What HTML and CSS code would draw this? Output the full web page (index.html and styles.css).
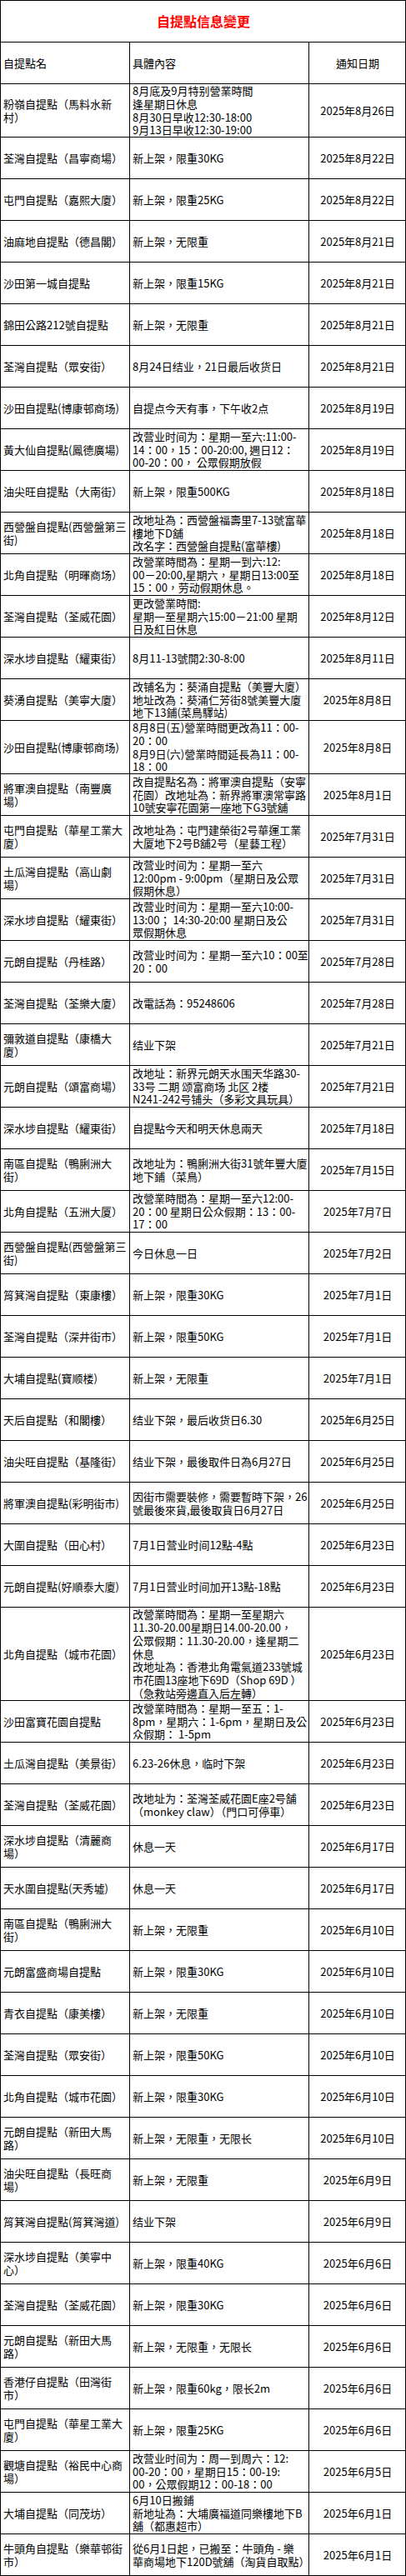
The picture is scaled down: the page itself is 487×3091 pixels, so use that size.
FILE: index.html
```html
<!DOCTYPE html>
<html lang="zh-Hant">
<head>
<meta charset="utf-8">
<title>自提點信息變更</title>
<link rel="stylesheet" href="styles.css">
</head>
<body>
<div class="sheet">
  <div class="cell title">自提點信息變更</div>

  <div class="cell n">自提點名</div>
  <div class="cell d">具體內容</div>
  <div class="cell dt">通知日期</div>

  <div class="cell n">粉嶺自提點（馬料水新<br>村）</div>
  <div class="cell d">8月底及9月特别營業時間<br>逢星期日休息<br>8月30日早收12:30-18:00<br>9月13日早收12:30-19:00</div>
  <div class="cell dt">2025年8月26日</div>

  <div class="cell n">荃灣自提點（昌寧商場）</div>
  <div class="cell d">新上架，限重30KG</div>
  <div class="cell dt">2025年8月22日</div>

  <div class="cell n">屯門自提點（嘉熙大廈）</div>
  <div class="cell d">新上架，限重25KG</div>
  <div class="cell dt">2025年8月22日</div>

  <div class="cell n">油麻地自提點（德昌閣）</div>
  <div class="cell d">新上架，无限重</div>
  <div class="cell dt">2025年8月21日</div>

  <div class="cell n">沙田第一城自提點</div>
  <div class="cell d">新上架，限重15KG</div>
  <div class="cell dt">2025年8月21日</div>

  <div class="cell n">錦田公路212號自提點</div>
  <div class="cell d">新上架，无限重</div>
  <div class="cell dt">2025年8月21日</div>

  <div class="cell n">荃灣自提點（眾安街）</div>
  <div class="cell d">8月24日结业，21日最后收货日</div>
  <div class="cell dt">2025年8月21日</div>

  <div class="cell n">沙田自提點(博康邨商场)</div>
  <div class="cell d">自提点今天有事，下午收2点</div>
  <div class="cell dt">2025年8月19日</div>

  <div class="cell n">黃大仙自提點(鳳德廣場)</div>
  <div class="cell d">改营业时间为：星期一至六:11:00-<br>14：00，15：00-20:00, 週日12：<br>00-20：00， 公眾假期放假</div>
  <div class="cell dt">2025年8月19日</div>

  <div class="cell n">油尖旺自提點（大南街）</div>
  <div class="cell d">新上架，限重500KG</div>
  <div class="cell dt">2025年8月18日</div>

  <div class="cell n">西營盤自提點(西營盤第三<br>街)</div>
  <div class="cell d">改地址為：西營盤福壽里7-13號富華<br>樓地下D舖<br>改名字：西營盤自提點(富華樓)</div>
  <div class="cell dt">2025年8月18日</div>

  <div class="cell n">北角自提點（明暉商场）</div>
  <div class="cell d">改營業時間為：星期一到六:12:<br>00－20:00,星期六，星期日13:00至<br>15：00，劳动假期休息。</div>
  <div class="cell dt">2025年8月18日</div>

  <div class="cell n">荃灣自提點（荃威花園）</div>
  <div class="cell d">更改營業時間:<br>星期一至星期六15:00－21:00 星期<br>日及紅日休息</div>
  <div class="cell dt">2025年8月12日</div>

  <div class="cell n">深水埗自提點（耀東街）</div>
  <div class="cell d">8月11-13號開2:30-8:00</div>
  <div class="cell dt">2025年8月11日</div>

  <div class="cell n">葵湧自提點（美寧大廈）</div>
  <div class="cell d">改铺名为：葵涌自提點（美豐大廈）<br>地址改為：葵涌仁芳街8號美豐大廈<br>地下13鋪(菜鳥驛站)</div>
  <div class="cell dt">2025年8月8日</div>

  <div class="cell n">沙田自提點(博康邨商场)</div>
  <div class="cell d">8月8日(五)營業時間更改為11：00-<br>20：00<br>8月9日(六)營業時間延長為11：00-<br>18：00</div>
  <div class="cell dt">2025年8月8日</div>

  <div class="cell n">將軍澳自提點（南豐廣<br>場）</div>
  <div class="cell d">改自提點名為：將軍澳自提點（安寧<br>花園）改地址為：新界將軍澳常寧路<br>10號安寧花園第一座地下G3號舖</div>
  <div class="cell dt">2025年8月1日</div>

  <div class="cell n">屯門自提點（華星工業大<br>廈）</div>
  <div class="cell d">改地址為：屯門建榮街2号華運工業<br>大厦地下2号B舖2号（星藝工程）</div>
  <div class="cell dt">2025年7月31日</div>

  <div class="cell n">土瓜灣自提點（高山劇<br>場）</div>
  <div class="cell d">改营业时间为：星期一至六<br>12:00pm - 9:00pm（星期日及公眾<br>假期休息）</div>
  <div class="cell dt">2025年7月31日</div>

  <div class="cell n">深水埗自提點（耀東街）</div>
  <div class="cell d">改营业时间为：星期一至六10:00-<br>13:00；  14:30-20:00 星期日及公<br>眾假期休息</div>
  <div class="cell dt">2025年7月31日</div>

  <div class="cell n">元朗自提點（丹桂路）</div>
  <div class="cell d">改营业时间为：星期一至六10：00至<br>20：00</div>
  <div class="cell dt">2025年7月28日</div>

  <div class="cell n">荃灣自提點（荃樂大廈）</div>
  <div class="cell d">改電話為：95248606</div>
  <div class="cell dt">2025年7月28日</div>

  <div class="cell n">彌敦道自提點（康橋大<br>廈）</div>
  <div class="cell d">结业下架</div>
  <div class="cell dt">2025年7月21日</div>

  <div class="cell n">元朗自提點（頌富商場）</div>
  <div class="cell d">改地址：新界元朗天水围天华路30-<br>33号 二期 颂富商场 北区 2楼<br>N241-242号铺头（多彩文具玩具）</div>
  <div class="cell dt">2025年7月21日</div>

  <div class="cell n">深水埗自提點（耀東街）</div>
  <div class="cell d">自提點今天和明天休息兩天</div>
  <div class="cell dt">2025年7月18日</div>

  <div class="cell n">南區自提點（鴨脷洲大<br>街）</div>
  <div class="cell d">改地址为：鴨脷洲大街31號年豐大廈<br>地下鋪（菜鳥）</div>
  <div class="cell dt">2025年7月15日</div>

  <div class="cell n">北角自提點（五洲大厦）</div>
  <div class="cell d">改營業時間為：星期一至六12:00-<br>20：00  星期日公众假期：13：00-<br>17：00</div>
  <div class="cell dt">2025年7月7日</div>

  <div class="cell n">西營盤自提點(西營盤第三<br>街)</div>
  <div class="cell d">今日休息一日</div>
  <div class="cell dt">2025年7月2日</div>

  <div class="cell n">筲箕灣自提點（東康樓）</div>
  <div class="cell d">新上架，限重30KG</div>
  <div class="cell dt">2025年7月1日</div>

  <div class="cell n">荃灣自提點（深井街市）</div>
  <div class="cell d">新上架，限重50KG</div>
  <div class="cell dt">2025年7月1日</div>

  <div class="cell n">大埔自提點(寶顺楼)</div>
  <div class="cell d">新上架，无限重</div>
  <div class="cell dt">2025年7月1日</div>

  <div class="cell n">天后自提點（和閣樓）</div>
  <div class="cell d">结业下架，最后收货日6.30</div>
  <div class="cell dt">2025年6月25日</div>

  <div class="cell n">油尖旺自提點（基隆街）</div>
  <div class="cell d">结业下架，最後取件日為6月27日</div>
  <div class="cell dt">2025年6月25日</div>

  <div class="cell n">將軍澳自提點(彩明街市)</div>
  <div class="cell d">因街市需要裝修，需要暫時下架，26<br>號最後來貨,最後取貨日6月27日</div>
  <div class="cell dt">2025年6月25日</div>

  <div class="cell n">大圍自提點（田心村）</div>
  <div class="cell d">7月1日营业时间12點-4點</div>
  <div class="cell dt">2025年6月23日</div>

  <div class="cell n">元朗自提點(好順泰大廈)</div>
  <div class="cell d">7月1日营业时间加开13點-18點</div>
  <div class="cell dt">2025年6月23日</div>

  <div class="cell n tall">北角自提點（城市花園）</div>
  <div class="cell d tall">改營業時間為：星期一至星期六<br>11.30-20.00星期日14.00-20.00，<br>公眾假期：11.30-20.00，逢星期二<br>休息<br>改地址為：香港北角電氣道233號城<br>市花園13座地下69D（Shop 69D ）<br>（急救站旁邊直入后左轉）</div>
  <div class="cell dt tall">2025年6月23日</div>

  <div class="cell n">沙田富寶花園自提點</div>
  <div class="cell d">改營業時間為：星期一至五：1-<br>8pm，星期六：1-6pm，星期日及公<br>众假期：  1-5pm</div>
  <div class="cell dt">2025年6月23日</div>

  <div class="cell n">土瓜灣自提點（美景街）</div>
  <div class="cell d">6.23-26休息，临时下架</div>
  <div class="cell dt">2025年6月23日</div>

  <div class="cell n">荃灣自提點（荃威花園）</div>
  <div class="cell d">改地址为：荃灣荃威花園E座2号舗<br>（monkey claw）（門口可停車）</div>
  <div class="cell dt">2025年6月23日</div>

  <div class="cell n">深水埗自提點（清麗商<br>場）</div>
  <div class="cell d">休息一天</div>
  <div class="cell dt">2025年6月17日</div>

  <div class="cell n">天水圍自提點(天秀墟)</div>
  <div class="cell d">休息一天</div>
  <div class="cell dt">2025年6月17日</div>

  <div class="cell n">南區自提點（鴨脷洲大<br>街）</div>
  <div class="cell d">新上架，无限重</div>
  <div class="cell dt">2025年6月10日</div>

  <div class="cell n">元朗富盛商場自提點</div>
  <div class="cell d">新上架，限重30KG</div>
  <div class="cell dt">2025年6月10日</div>

  <div class="cell n">青衣自提點（康美樓）</div>
  <div class="cell d">新上架，无限重</div>
  <div class="cell dt">2025年6月10日</div>

  <div class="cell n">荃灣自提點（眾安街）</div>
  <div class="cell d">新上架，限重50KG</div>
  <div class="cell dt">2025年6月10日</div>

  <div class="cell n">北角自提點（城市花園）</div>
  <div class="cell d">新上架，限重30KG</div>
  <div class="cell dt">2025年6月10日</div>

  <div class="cell n">元朗自提點（新田大馬<br>路）</div>
  <div class="cell d">新上架，无限重，无限长</div>
  <div class="cell dt">2025年6月10日</div>

  <div class="cell n">油尖旺自提點（長旺商<br>場）</div>
  <div class="cell d">新上架，无限重</div>
  <div class="cell dt">2025年6月9日</div>

  <div class="cell n">筲箕灣自提點(筲箕灣道)</div>
  <div class="cell d">结业下架</div>
  <div class="cell dt">2025年6月9日</div>

  <div class="cell n">深水埗自提點（美寧中<br>心）</div>
  <div class="cell d">新上架，限重40KG</div>
  <div class="cell dt">2025年6月6日</div>

  <div class="cell n">荃灣自提點（荃威花園）</div>
  <div class="cell d">新上架，限重30KG</div>
  <div class="cell dt">2025年6月6日</div>

  <div class="cell n">元朗自提點（新田大馬<br>路）</div>
  <div class="cell d">新上架，无限重，无限长</div>
  <div class="cell dt">2025年6月6日</div>

  <div class="cell n">香港仔自提點（田灣街<br>市）</div>
  <div class="cell d">新上架，限重60kg，限长2m</div>
  <div class="cell dt">2025年6月6日</div>

  <div class="cell n">屯門自提點（華星工業大<br>廈）</div>
  <div class="cell d">新上架，限重25KG</div>
  <div class="cell dt">2025年6月6日</div>

  <div class="cell n">觀塘自提點（裕民中心商<br>場）</div>
  <div class="cell d">改营业时间为：周一到周六：12:<br>00-20：00，星期日15：00-19:<br>00，公眾假期12：00-18：00</div>
  <div class="cell dt">2025年6月5日</div>

  <div class="cell n">大埔自提點（同茂坊）</div>
  <div class="cell d">6月10日搬鋪<br>新地址為：大埔廣福道同樂樓地下B<br>舖（都惠超市）</div>
  <div class="cell dt">2025年6月1日</div>

  <div class="cell n">牛頭角自提點（樂華邨街<br>市）</div>
  <div class="cell d">從6月1日起，已搬至：牛頭角 - 樂<br>華商場地下120D號舖（淘貨自取點）</div>
  <div class="cell dt">2025年6月1日</div>
</div>
</body>
</html>
```

FILE: styles.css
```css
html, body {
  margin: 0;
  padding: 0;
  background: #fff;
}

body {
  font-family: "Noto Sans CJK TC", "Noto Sans CJK SC", sans-serif;
  font-size: 13px;
  color: #000;
}

.sheet {
  display: grid;
  grid-template-columns: 155px 215px 116px;
  width: 487px;
  box-sizing: border-box;
  border-top: 1px solid #000;
  border-left: 1px solid #000;
}

.cell {
  box-sizing: border-box;
  min-height: 50px;
  border-right: 1px solid #000;
  border-bottom: 1px solid #000;
  padding: 0 2px 0 3px;
  display: flex;
  align-items: center;
  line-height: 15.75px;
  white-space: nowrap;
}

.title {
  grid-column: 1 / 4;
  justify-content: center;
  color: #ff0000;
  font-weight: bold;
  font-size: 16px;
}

.dt {
  justify-content: center;
}

.tall {
  min-height: 112px;
}
```
